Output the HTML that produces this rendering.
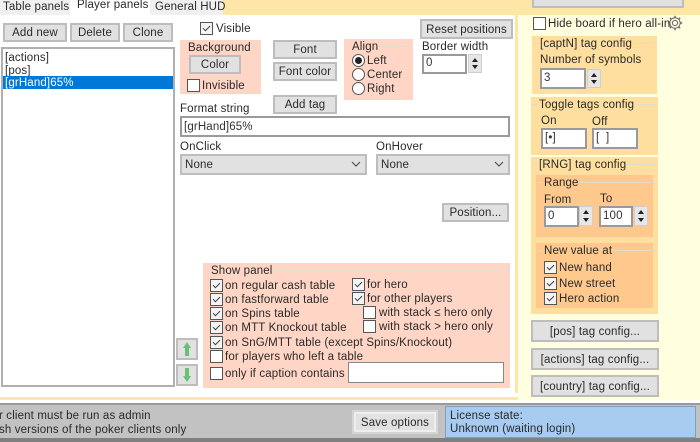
<!DOCTYPE html>
<html><head><meta charset="utf-8"><style>
html,body{margin:0;padding:0}
#r{position:relative;width:700px;height:442px;overflow:hidden;background:#ffffe0;font:11.5px "Liberation Sans",sans-serif;color:#2a2a2a;letter-spacing:.14px;filter:blur(.3px)}
#r div,#r span{position:absolute;box-sizing:border-box}
.t{line-height:16px;white-space:nowrap}
.b{background:#e1e1e1;border:2px solid #bdbdbd;padding-top:1px;text-align:center;line-height:14px;white-space:nowrap;display:flex;align-items:center;justify-content:center}
.i{background:#fff;border:2px solid #9a9a9a;line-height:15px;padding-left:2px;white-space:nowrap;color:#333}
.c{width:13px;height:13px;border:1px solid #555;background:#fff}
.k{background:#f4f4f4}
.k::after{content:"";position:absolute;left:2px;top:0;width:6px;height:3px;border-left:1.2px solid #444;border-bottom:1.2px solid #444;transform:translateY(2.5px) rotate(-45deg)}
.o{width:13px;height:13px;border:1px solid #555;border-radius:50%;background:#fff}
.g{background:#ffd5c6}
.y{background:#ffdf9f}
.f{background:#ffc88c}
.l{height:1px;background:#e3dcc8}
.s{background:#e6e6e6;border:1px solid #cfcfcf;width:14px}
.s::before{content:"";position:absolute;left:3px;top:3px;border:3.5px solid transparent;border-top:0;border-bottom:4px solid #222}
.s::after{content:"";position:absolute;left:3px;bottom:3px;border:3.5px solid transparent;border-bottom:0;border-top:4px solid #222}
.sel{background:#e1e1e1;border:2px solid #bdbdbd;line-height:18px;padding-left:3px}
.sel svg{position:absolute;right:4px;top:5px}
</style></head><body><div id="r">
<div style="left:223px;top:0;width:477px;height:15px;background:#fde6a6"></div>
<div style="left:0;top:15px;width:519px;height:382px;background:#fff"></div>
<div style="left:515px;top:15px;width:3px;height:382px;background:#fde6a6"></div>
<div style="left:0;top:393px;width:519px;height:10px;background:#fff"></div>
<div style="left:0;top:397px;width:518px;height:3px;background:#fde6a6"></div>

<div class="t" style="left:0;top:0;width:70px;height:15px;background:#f0f0f0;padding-left:3px;line-height:14px">Table panels</div>
<div class="t" style="left:70px;top:-2px;width:80px;height:18px;background:#fff;padding-left:7px;line-height:14px">Player panels</div>
<div class="t" style="left:150px;top:0;width:73px;height:15px;background:#f0f0f0;padding-left:5px;line-height:14px">General HUD</div>

<div class="b" style="left:3px;top:23px;width:64px;height:19px">Add new</div>
<div class="b" style="left:70px;top:23px;width:50px;height:19px">Delete</div>
<div class="b" style="left:123px;top:23px;width:50px;height:19px">Clone</div>
<div style="left:1px;top:47px;width:174px;height:340px;border:2px solid #b0b0b0;background:#fff"></div>
<div class="t" style="left:5px;top:50px">[actions]</div>
<div class="t" style="left:5px;top:63px">[pos]</div>
<div class="t" style="left:3px;top:76px;width:170px;height:13px;background:#0078d7;color:#fff;padding-left:2px;line-height:15px">[grHand]65%</div>

<div class="c k" style="left:200px;top:22px"></div><div class="t" style="left:216px;top:21px">Visible</div>
<div class="g" style="left:180px;top:40px;width:81px;height:54px"></div>
<div class="l" style="left:183px;top:47px;width:75px"></div>
<div class="t g" style="left:187px;top:40px;padding:0 1px">Background</div>
<div class="b" style="left:189px;top:55px;width:52px;height:19px">Color</div>
<div class="c" style="left:187px;top:79px"></div><div class="t" style="left:202px;top:78px">Invisible</div>

<div class="b" style="left:273px;top:40px;width:64px;height:19px">Font</div>
<div class="b" style="left:273px;top:62px;width:64px;height:19px">Font color</div>
<div class="b" style="left:273px;top:95px;width:64px;height:19px">Add tag</div>

<div class="g" style="left:344px;top:39px;width:69px;height:61px"></div>
<div class="l" style="left:347px;top:46px;width:63px"></div>
<div class="t g" style="left:351px;top:39px;padding:0 1px">Align</div>
<div class="o" style="left:352px;top:54px"></div><div style="left:355px;top:57px;width:7px;height:7px;border-radius:50%;background:#222"></div>
<div class="t" style="left:367px;top:53px">Left</div>
<div class="o" style="left:352px;top:68px"></div><div class="t" style="left:367px;top:67px">Center</div>
<div class="o" style="left:352px;top:82px"></div><div class="t" style="left:367px;top:81px">Right</div>

<div class="b" style="left:420px;top:19px;width:93px;height:20px">Reset positions</div>
<div class="t" style="left:422px;top:39px">Border width</div>
<div class="i" style="left:422px;top:54px;width:45px;height:20px">0</div>
<div class="s" style="left:468px;top:54px;height:19px"></div>

<div class="t" style="left:180px;top:101px">Format string</div>
<div class="i" style="left:180px;top:116px;width:330px;height:21px;padding-top:2px">[grHand]65%</div>
<div class="t" style="left:180px;top:139px">OnClick</div>
<div class="sel" style="left:180px;top:154px;width:187px;height:21px">None<svg width="10" height="6"><path d="M1 1l4 4 4-4" fill="none" stroke="#444"/></svg></div>
<div class="t" style="left:376px;top:139px">OnHover</div>
<div class="sel" style="left:376px;top:154px;width:134px;height:21px">None<svg width="10" height="6"><path d="M1 1l4 4 4-4" fill="none" stroke="#444"/></svg></div>

<div class="b" style="left:442px;top:203px;width:67px;height:19px">Position...</div>

<div class="g" style="left:203px;top:263px;width:307px;height:125px"></div>
<div class="l" style="left:206px;top:270px;width:301px;background:#eadfd6"></div>
<div class="t g" style="left:210px;top:263px;padding:0 1px">Show panel</div>
<div class="c k" style="left:210px;top:279px"></div><div class="t" style="left:225px;top:278px">on regular cash table</div>
<div class="c k" style="left:210px;top:293px"></div><div class="t" style="left:225px;top:292px">on fastforward table</div>
<div class="c k" style="left:210px;top:307px"></div><div class="t" style="left:225px;top:306px">on Spins table</div>
<div class="c k" style="left:210px;top:321px"></div><div class="t" style="left:225px;top:320px">on MTT Knockout table</div>
<div class="c k" style="left:210px;top:336px"></div><div class="t" style="left:225px;top:335px">on SnG/MTT table (except Spins/Knockout)</div>
<div class="c" style="left:210px;top:350px"></div><div class="t" style="left:225px;top:349px">for players who left a table</div>
<div class="c" style="left:210px;top:367px"></div><div class="t" style="left:225px;top:366px">only if caption contains</div>
<div class="c k" style="left:352px;top:278px"></div><div class="t" style="left:367px;top:277px">for hero</div>
<div class="c k" style="left:352px;top:292px"></div><div class="t" style="left:367px;top:291px">for other players</div>
<div class="c" style="left:363px;top:306px"></div><div class="t" style="left:379px;top:305px">with stack ≤ hero only</div>
<div class="c" style="left:363px;top:320px"></div><div class="t" style="left:379px;top:319px">with stack &gt; hero only</div>
<div class="i" style="left:348px;top:362px;width:156px;height:21px;border-width:1px;border-color:#888"></div>

<div class="b" style="left:176px;top:338px;width:22px;height:22px"></div>
<svg style="position:absolute;left:181px;top:342px" width="12" height="14"><path d="M6 0L10 6H8V14H4V6H2Z" fill="#6cbf78"/></svg>
<div class="b" style="left:176px;top:364px;width:22px;height:22px"></div>
<svg style="position:absolute;left:181px;top:368px" width="12" height="14"><path d="M6 14L10 8H8V0H4V8H2Z" fill="#6cbf78"/></svg>

<div style="left:532px;top:-10px;width:152px;height:18px;background:#e1e1e1;border:2px solid #bdbdbd"></div>
<div class="c" style="left:533px;top:17px"></div><div class="t" style="left:548px;top:16px">Hide board if hero all-in</div>
<svg style="position:absolute;left:667px;top:15px" width="16" height="16" viewBox="0 0 16 16"><circle cx="8" cy="8" r="2.6" fill="none" stroke="#666"/><circle cx="8" cy="8" r="5.2" fill="none" stroke="#666"/><path d="M8 .8v2.2M8 13v2.2M.8 8H3M13 8h2.2M2.9 2.9l1.6 1.6M11.5 11.5l1.6 1.6M13.1 2.9l-1.6 1.6M4.5 11.5l-1.6 1.6" stroke="#666" stroke-width="1.4"/></svg>

<div class="y" style="left:532px;top:36px;width:125px;height:58px"></div>
<div class="l" style="left:534px;top:43px;width:121px"></div>
<div class="t y" style="left:539px;top:36px;padding:0 1px">[captN] tag config</div>
<div class="t" style="left:540px;top:52px">Number of symbols</div>
<div class="i" style="left:540px;top:68px;width:46px;height:21px;padding-top:1px">3</div>
<div class="s" style="left:587px;top:69px;height:19px"></div>

<div class="y" style="left:531px;top:97px;width:127px;height:58px"></div>
<div class="l" style="left:533px;top:104px;width:123px"></div>
<div class="t y" style="left:538px;top:97px;padding:0 1px">Toggle tags config</div>
<div class="t" style="left:541px;top:113px">On</div>
<div class="t" style="left:592px;top:114px">Off</div>
<div class="i" style="left:541px;top:128px;width:46px;height:21px;padding-top:1px">[•]</div>
<div class="i" style="left:592px;top:128px;width:46px;height:21px;padding-top:1px">[&nbsp; ]</div>

<div class="y" style="left:531px;top:157px;width:127px;height:157px"></div>
<div class="l" style="left:533px;top:164px;width:123px"></div>
<div class="t y" style="left:538px;top:157px;padding:0 1px">[RNG] tag config</div>
<div class="f" style="left:536px;top:175px;width:117px;height:62px"></div>
<div class="l" style="left:538px;top:182px;width:113px"></div>
<div class="t f" style="left:543px;top:175px;padding:0 1px">Range</div>
<div class="t" style="left:544px;top:192px">From</div>
<div class="t" style="left:600px;top:191px">To</div>
<div class="i" style="left:544px;top:206px;width:35px;height:21px;padding-top:1px">0</div>
<div class="s" style="left:579px;top:206px;height:20px"></div>
<div class="i" style="left:599px;top:206px;width:34px;height:21px;padding-top:1px">100</div>
<div class="s" style="left:634px;top:206px;height:20px"></div>
<div class="f" style="left:536px;top:243px;width:117px;height:65px"></div>
<div class="l" style="left:538px;top:250px;width:113px"></div>
<div class="t f" style="left:543px;top:243px;padding:0 1px">New value at</div>
<div class="c k" style="left:544px;top:261px"></div><div class="t" style="left:559px;top:260px">New hand</div>
<div class="c k" style="left:544px;top:277px"></div><div class="t" style="left:559px;top:276px">New street</div>
<div class="c k" style="left:544px;top:292px"></div><div class="t" style="left:559px;top:291px">Hero action</div>

<div class="b" style="left:531px;top:320px;width:128px;height:22px">[pos] tag config...</div>
<div class="b" style="left:531px;top:348px;width:128px;height:22px">[actions] tag config...</div>
<div class="b" style="left:531px;top:375px;width:128px;height:22px">[country] tag config...</div>

<div style="left:519px;top:400px;width:181px;height:3px;background:#fff"></div>
<div style="left:0;top:403px;width:700px;height:39px;background:#c2c2c2;border-top:2px solid #999;border-bottom:4px solid #808080"></div>
<div class="t" style="left:-1px;top:408px">r client must be run as admin</div>
<div class="t" style="left:-1px;top:422px">sh versions of the poker clients only</div>
<div style="left:352px;top:410px;width:86px;height:24px;border:2px solid #d5d5d5;background:#c2c2c2"></div>
<div class="b" style="left:354px;top:412px;width:82px;height:20px;background:#e1e1e1;border-color:#eee">Save options</div>
<div style="left:445px;top:406px;width:251px;height:32px;background:#a8cbf0;border:1px solid #7f9fc0"></div>
<div class="t" style="left:450px;top:408px">License state:</div>
<div class="t" style="left:450px;top:421px">Unknown (waiting login)</div>
</div></body></html>
